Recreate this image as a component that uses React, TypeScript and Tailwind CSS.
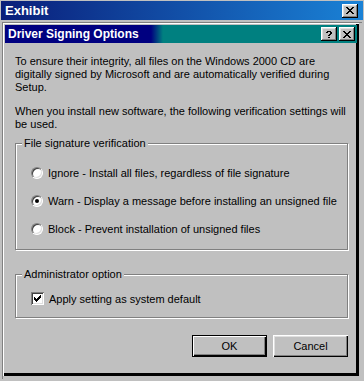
import React from "react";

const Pix = ({ rows, color = "#000" }: { rows: string[]; color?: string }) => {
  const w = rows[0].length;
  const h = rows.length;
  const rects: React.ReactNode[] = [];
  rows.forEach((r, y) =>
    r.split("").forEach((c, x) => {
      if (c === "X") rects.push(<rect key={`${x}-${y}`} x={x} y={y} width={1} height={1} fill={color} />);
    })
  );
  return (
    <svg width={w} height={h} viewBox={`0 0 ${w} ${h}`} shapeRendering="crispEdges">
      {rects}
    </svg>
  );
};

const X_ROWS = ["XX....XX", ".XX..XX.", "..XXXX..", "...XX...", "..XXXX..", ".XX..XX.", "XX....XX"];
const Q_ROWS = [".XXXX.", "XX..XX", "....XX", "...XX.", "..XX..", "......", "..XX.."];
const CHECK_ROWS = ["......X", ".....XX", "X...XXX", "XX.XXX.", "XXXXX..", ".XXX...", "..X...."];

const CapBtn = ({ children }: { children: React.ReactNode }) => (
  <div className="w-[16px] h-[14px] bg-[#c0c0c0] flex items-center justify-center shadow-[inset_-1px_-1px_0_#000,inset_1px_1px_0_#fff,inset_-2px_-2px_0_#808080,inset_2px_2px_0_#dfdfdf]">
    {children}
  </div>
);

const Radio = ({ checked }: { checked?: boolean }) => (
  <div className="w-[12px] h-[12px] rounded-full bg-white border border-t-[#808080] border-l-[#808080] border-b-white border-r-white flex items-center justify-center shrink-0">
    <div className="w-[10px] h-[10px] rounded-full shadow-[inset_1px_1px_0_#404040,inset_-1px_-1px_0_#dfdfdf] flex items-center justify-center">
      {checked && <div className="w-[4px] h-[4px] rounded-full bg-black" />}
    </div>
  </div>
);

const Group = ({ label, children, className }: { label: string; children: React.ReactNode; className?: string }) => (
  <div className={`relative border border-[#808080] shadow-[inset_1px_1px_0_#fff,1px_1px_0_#fff] ${className ?? ""}`}>
    <span className="absolute left-[6px] top-[-8px] bg-[#c0c0c0] px-[2px] leading-[14px]">{label}</span>
    {children}
  </div>
);

export default function App() {
  return (
    <div className="w-[364px] h-[381px] bg-[#c0c0c0] overflow-hidden flex flex-col font-['Liberation_Sans',Arial,sans-serif] text-[11px] text-black">
      {/* Outer Exhibit title bar */}
      <div className="h-[19px] mx-[1px] mt-[1px] flex items-center justify-between pl-[4px] pr-[5px] bg-[linear-gradient(to_right,#0a1e7a,#1a82d6)]">
        <span className="text-white font-bold text-[13px] leading-none">Exhibit</span>
        <CapBtn>
          <Pix rows={X_ROWS} />
        </CapBtn>
      </div>
      {/* Client area */}
      <div className="flex-1 flex flex-col pt-[2px] pl-[2px] pr-[2px] pb-[2px]">
        <div className="flex-1 flex flex-col border-l border-t border-[#808080]">
          <div className="flex-1 flex flex-col p-[2px] shadow-[inset_1px_1px_0_#fff,inset_-1px_-1px_0_#000,inset_-3px_-3px_0_#000,inset_-2px_-2px_0_#000] mr-[3px] mb-[3px]">
            {/* Dialog title */}
            <div className="h-[18px] flex items-center justify-between pl-[3px] pr-[2px] bg-[linear-gradient(to_right,#000080_0px,#000080_146px,#008080_158px,#008080_100%)]">
              <span className="text-white font-bold text-[12px] leading-none">Driver Signing Options</span>
              <div className="flex gap-[2px]">
                <CapBtn>
                  <Pix rows={Q_ROWS} />
                </CapBtn>
                <CapBtn>
                  <Pix rows={X_ROWS} />
                </CapBtn>
              </div>
            </div>
            {/* Body */}
            <div className="flex-1 flex flex-col pl-[10px] pr-[9px] pt-[12px]">
              <p className="leading-[13px]">
                To ensure their integrity, all files on the Windows 2000 CD are
                <br />
                digitally signed by Microsoft and are automatically verified during
                <br />
                Setup.
              </p>
              <p className="leading-[13px] mt-[11px]">
                When you install new software, the following verification settings will
                <br />
                be used.
              </p>
              <Group label="File signature verification" className="mt-[12px] h-[107px] flex flex-col pt-[23px] pl-[15px] gap-[16px]">
                <div className="flex items-center gap-[5px] leading-[12px]">
                  <Radio />
                  <span>Ignore - Install all files, regardless of file signature</span>
                </div>
                <div className="flex items-center gap-[5px] leading-[12px]">
                  <Radio checked />
                  <span>Warn - Display a message before installing an unsigned file</span>
                </div>
                <div className="flex items-center gap-[5px] leading-[12px]">
                  <Radio />
                  <span>Block - Prevent installation of unsigned files</span>
                </div>
              </Group>
              <Group label="Administrator option" className="mt-[24px] h-[44px] flex flex-col pt-[17px] pl-[15px]">
                <div className="flex items-center gap-[5px] leading-[12px]">
                  <div className="w-[13px] h-[13px] bg-white flex items-center justify-center shrink-0 shadow-[inset_1px_1px_0_#808080,inset_-1px_-1px_0_#fff,inset_2px_2px_0_#404040,inset_-2px_-2px_0_#dfdfdf]">
                    <Pix rows={CHECK_ROWS} />
                  </div>
                  <span>Apply setting as system default</span>
                </div>
              </Group>
              <div className="flex justify-end gap-[6px] mt-[17px]">
                <button className="w-[75px] h-[22px] border border-black bg-[#c0c0c0] shadow-[inset_1px_1px_0_#fff,inset_-1px_-1px_0_#000,inset_-2px_-2px_0_#808080] text-[11px]">
                  OK
                </button>
                <button className="w-[75px] h-[22px] bg-[#c0c0c0] shadow-[inset_1px_1px_0_#fff,inset_-1px_-1px_0_#000,inset_-2px_-2px_0_#808080,inset_2px_2px_0_#dfdfdf] text-[11px]">
                  Cancel
                </button>
              </div>
            </div>
          </div>
        </div>
      </div>
    </div>
  );
}
